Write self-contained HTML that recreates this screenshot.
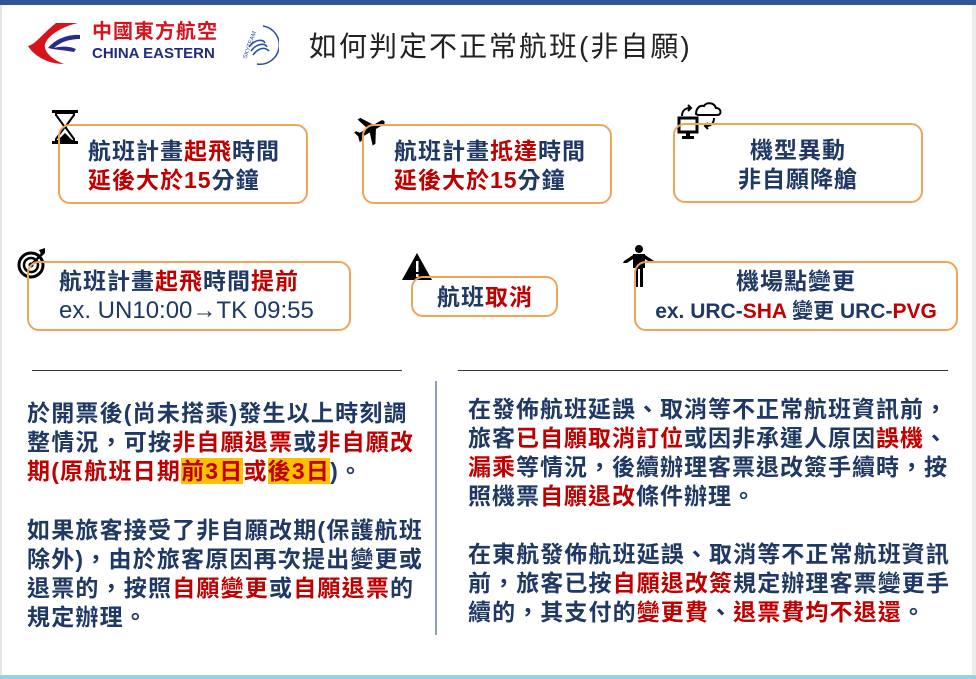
<!DOCTYPE html>
<html><head><meta charset="utf-8"><style>
*{margin:0;padding:0;box-sizing:border-box}
body{width:976px;height:679px;background:#fff;position:relative;overflow:hidden;font-family:"Liberation Sans","Noto Sans CJK TC",sans-serif;color:#1f3864}
.a{position:absolute}
.r{color:#c00000}
.box{position:absolute;border:2.5px solid #f0a457;border-radius:12px;font-size:23px;font-weight:bold;line-height:29px;white-space:nowrap;letter-spacing:1px}
.t{position:absolute;font-size:23px;font-weight:bold;line-height:29px;white-space:nowrap;letter-spacing:1.2px}
.hl{background:#ffc000}
</style></head><body>
<div class="a" style="left:0;top:0;width:976px;height:5px;background:#2f5597"></div>
<div class="a" style="left:0;top:5px;width:2px;height:674px;background:#e6e6e6"></div>
<div class="a" style="left:972px;top:5px;width:4px;height:674px;background:#ececec"></div>
<div class="a" style="left:0;top:675px;width:976px;height:4px;background:#92d5de"></div>

<svg class="a" style="left:26px;top:22px" width="62" height="44" viewBox="0 0 62 44">
<path d="M30 1 L52 1 C38 4 24 12 20 20 C16 26 22 36 38 42 C22 42 8 34 2 24 C10 22 14 14 30 1Z" fill="#d7141e"/>
<path d="M22 26 C30 16 44 12 54 13 L54 17 C44 17 34 20 28 26 C34 24 44 24 50 27 L48 30 C38 28 30 28 22 26Z" fill="#2a2a8c"/>
</svg>
<div class="a" style="left:92px;top:20px;font-size:20px;font-weight:bold;color:#d7141e;letter-spacing:1px;line-height:25px">中國東方航空</div>
<div class="a" style="left:92px;top:45px;font-size:15px;font-weight:bold;color:#222a7a;line-height:18px">CHINA EASTERN</div>
<svg class="a" style="left:233px;top:21px" width="46" height="46" viewBox="0 0 46 46">
<path d="M30 5 A19 19 0 0 1 24 43" stroke="#2a4d9c" stroke-width="1.5" fill="none"/>
<text x="5" y="34" font-size="6" fill="#2a4d9c" font-family="Liberation Sans" transform="rotate(-70 12 30)">SKYTEAM</text>
<path d="M16 26 C22 18 30 18 32 22 M18 30 C24 22 32 22 34 26 M20 34 C26 26 32 26 36 30" stroke="#2a4d9c" stroke-width="1.6" fill="none"/>
</svg>
<div class="a" style="left:309px;top:27px;font-size:28px;color:#222;line-height:40px;letter-spacing:2px">如何判定不正常航班(非自願)</div>

<svg class="a" style="left:51px;top:109px" width="28" height="36" viewBox="0 0 28 36"><rect x="1" y="1" width="26" height="3" fill="#000"/><rect x="1" y="32" width="26" height="3" fill="#000"/><path d="M5 4 L23 4 L23 6 L15 17 L15 19 L23 30 L23 32 L5 32 L5 30 L13 19 L13 17 L5 6Z" fill="none" stroke="#000" stroke-width="2"/><path d="M7 31 L14 24 L21 31Z" fill="#000"/></svg>
<div class="box" style="left:58px;top:124px;width:250px;height:80px;padding:11px 0 0 28px">航班計畫<span class="r">起飛</span>時間<br><span class="r">延後大於15</span>分鐘</div>

<svg class="a" style="left:352px;top:110px" width="38" height="40" viewBox="0 0 24 24"><g transform="rotate(60 12 12)"><path d="M21 16v-2l-8-5V3.5c0-.83-.67-1.5-1.5-1.5S10 2.67 10 3.5V9l-8 5v2l8-2.5V19l-2 1.5V22l3.5-1 3.5 1v-1.5L13 19v-5.5l8 2.5z" fill="#000"/></g></svg>
<div class="box" style="left:362px;top:124px;width:250px;height:80px;padding:11px 0 0 30px">航班計畫<span class="r">抵達</span>時間<br><span class="r">延後大於15</span>分鐘</div>

<svg class="a" style="left:676px;top:102px" width="48" height="44" viewBox="0 0 48 44"><rect x="3" y="16" width="18" height="14" fill="none" stroke="#000" stroke-width="3"/><rect x="10" y="30" width="4" height="5" fill="#000"/><rect x="6" y="34" width="12" height="3" fill="#000"/><path d="M20 12 C20 6 24 3 28 4 C30 0 38 0 40 6 C45 6 46 12 42 13 L22 13 Z" fill="none" stroke="#000" stroke-width="2"/><path d="M6 14 C6 8 10 6 14 6 M12 3 L15 6 L12 9" fill="none" stroke="#000" stroke-width="2"/><path d="M38 16 C38 22 34 24 30 24 M32 21 L29 24 L32 27" fill="none" stroke="#000" stroke-width="2"/></svg>
<div class="box" style="left:673px;top:123px;width:250px;height:80px;padding:11px 0 0 0;text-align:center">機型異動<br>非自願降艙</div>

<svg class="a" style="left:17px;top:247px" width="30" height="32" viewBox="0 0 30 32"><circle cx="14" cy="18" r="12" fill="none" stroke="#000" stroke-width="3"/><circle cx="14" cy="18" r="7" fill="none" stroke="#000" stroke-width="2.5"/><circle cx="14" cy="18" r="2.5" fill="#000"/><path d="M14 18 L26 6" stroke="#000" stroke-width="2.5"/><path d="M22 3 L28 1 L28 6 L25 9 Z" fill="#000"/></svg>
<div class="box" style="left:27px;top:261px;width:324px;height:70px;padding:4px 0 0 30px">航班計畫<span class="r">起飛</span>時間<span class="r">提前</span><br><span style="font-weight:normal;font-size:24px;letter-spacing:0">ex. UN10:00→TK 09:55</span></div>

<svg class="a" style="left:401px;top:252px" width="32" height="29" viewBox="0 0 32 29"><path d="M16 1 L31 28 L1 28Z" fill="#000"/><rect x="15" y="9" width="2.5" height="11" fill="#fff"/><rect x="15" y="22" width="2.5" height="3" fill="#fff"/></svg>
<div class="box" style="left:411px;top:276px;width:147px;height:41px;padding:5px 0 0 24px">航班<span class="r">取消</span></div>

<svg class="a" style="left:622px;top:244px" width="34" height="44" viewBox="0 0 34 44"><circle cx="17" cy="5" r="4" fill="#000"/><path d="M11 10 L23 10 L23 24 L21 24 L21 43 L18 43 L18 25 L16 25 L16 43 L13 43 L13 24 L11 24 Z" fill="#000"/><path d="M11 11 L2 17 L1 19 L5 19 L11 15 M23 11 L32 17 L33 19 L29 19 L23 15" fill="#000"/></svg>
<div class="box" style="left:634px;top:261px;width:324px;height:70px;padding:4px 0 0 0;text-align:center">機場點變更<br><span style="font-size:21px;letter-spacing:0">ex. URC-<span class="r">SHA</span> 變更 URC-<span class="r">PVG</span></span></div>

<div class="a" style="left:32px;top:370px;width:370px;height:1px;background:#333"></div>
<div class="a" style="left:458px;top:370px;width:490px;height:1px;background:#333"></div>
<div class="a" style="left:435px;top:381px;width:2px;height:254px;background:#8aa0c0"></div>

<div class="t" style="left:27px;top:399px">於開票後(尚未搭乘)發生以上時刻調<br>整情況，可按<span class="r">非自願退票</span>或<span class="r">非自願改</span><br><span class="r">期(原航班日期<span class="hl">前3日</span>或<span class="hl">後3日</span></span>)。</div>
<div class="t" style="left:27px;top:516px">如果旅客接受了非自願改期(保護航班<br>除外)，由於旅客原因再次提出變更或<br>退票的，按照<span class="r">自願變更</span>或<span class="r">自願退票</span>的<br>規定辦理。</div>

<div class="t" style="left:468px;top:395px;letter-spacing:1px">在發佈航班延誤、取消等不正常航班資訊前，<br>旅客<span class="r">已自願取消訂位</span>或因非承運人原因<span class="r">誤機</span>、<br><span class="r">漏乘</span>等情況，後續辦理客票退改簽手續時，按<br>照機票<span class="r">自願退改</span>條件辦理。</div>
<div class="t" style="left:468px;top:540px;letter-spacing:1.1px">在東航發佈航班延誤、取消等不正常航班資訊<br>前，旅客已按<span class="r">自願退改簽</span>規定辦理客票變更手<br>續的，其支付的<span class="r">變更費</span>、<span class="r">退票費均不退還</span>。</div>
</body></html>
